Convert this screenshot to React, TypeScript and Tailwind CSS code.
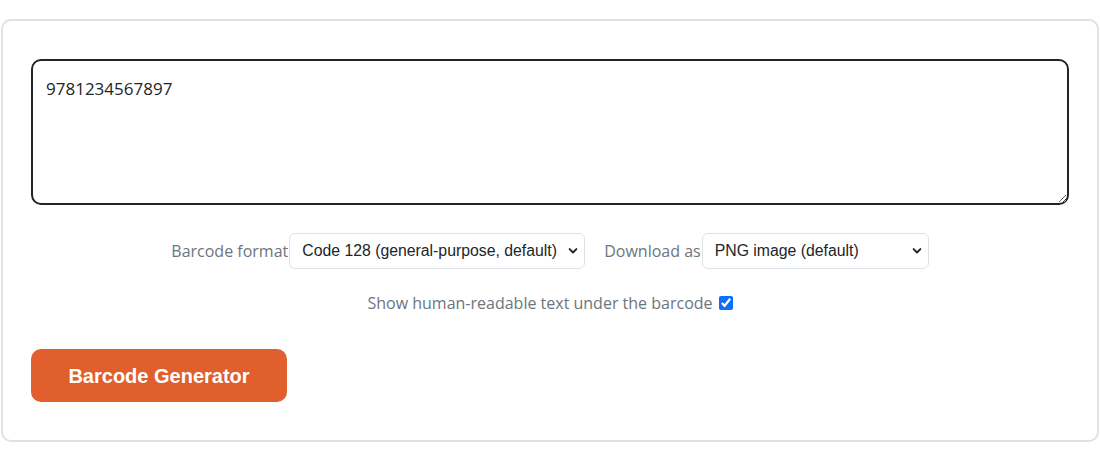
import { useState } from "react";

function Chevron() {
  return (
    <svg className="pointer-events-none absolute right-[6px] top-1/2 -translate-y-1/2" width="12" height="12" viewBox="0 0 16 16" fill="none">
      <path d="M3.5 5.5l4.5 4.5 4.5-4.5" stroke="#212529" strokeWidth="2.6" strokeLinecap="round" strokeLinejoin="round" />
    </svg>
  );
}

export default function App() {
  const [code, setCode] = useState("9781234567897");
  const [format, setFormat] = useState("code128");
  const [fileType, setFileType] = useState("png");
  const [showText, setShowText] = useState(true);

  return (
    <div className="bg-white min-h-[461px] pt-[19px] font-['Open_Sans',sans-serif]">
      <div className="mx-px border-2 border-[#dee2e6] rounded-[10px] bg-white px-[28px] pt-[38px] pb-[38px]">
        <textarea
          value={code}
          onChange={e => setCode(e.target.value)}
          className="block w-full h-[146px] border-2 border-[#212529] rounded-[10px] px-[13px] pt-[16px] text-[17px] leading-[24px] text-[#212529] outline-none resize-y"
        />

        <div className="mt-[28px] flex items-center justify-center text-[16px] text-[#6c757d]">
          <label className="mr-px">Barcode format</label>
          <div className="relative">
            <select
              value={format}
              onChange={e => setFormat(e.target.value)}
              className="appearance-none w-[296px] h-[36px] border border-[#dee2e6] rounded-[6px] bg-white pl-[12px] pr-[18px] text-[15.8px] text-[#212529] font-['Liberation_Sans',Arial,sans-serif]"
            >
              <option value="code128">Code 128 (general-purpose, default)</option>
              <option value="ean13">EAN-13</option>
              <option value="upca">UPC-A</option>
            </select>
            <Chevron />
          </div>
          <label className="ml-[19px] mr-px">Download as</label>
          <div className="relative">
            <select
              value={fileType}
              onChange={e => setFileType(e.target.value)}
              className="appearance-none w-[227px] h-[36px] border border-[#dee2e6] rounded-[6px] bg-white pl-[12px] pr-[18px] text-[15.8px] text-[#212529] font-['Liberation_Sans',Arial,sans-serif]"
            >
              <option value="png">PNG image (default)</option>
              <option value="svg">SVG image</option>
            </select>
            <Chevron />
          </div>
        </div>

        <div className="mt-[24px] flex items-center justify-center gap-[6px] text-[16px] leading-[20px] text-[#6c757d]">
          <span>Show human-readable text under the barcode</span>
          <input
            type="checkbox"
            checked={showText}
            onChange={e => setShowText(e.target.checked)}
            className="w-[14px] h-[14px] accent-[#0d6efd]"
          />
        </div>

        <button className="mt-[36px] w-[256px] h-[53px] rounded-[10px] bg-[#e05f2c] text-white text-[20px] font-bold font-['Liberation_Sans',Arial,sans-serif]">
          Barcode Generator
        </button>
      </div>
    </div>
  );
}
